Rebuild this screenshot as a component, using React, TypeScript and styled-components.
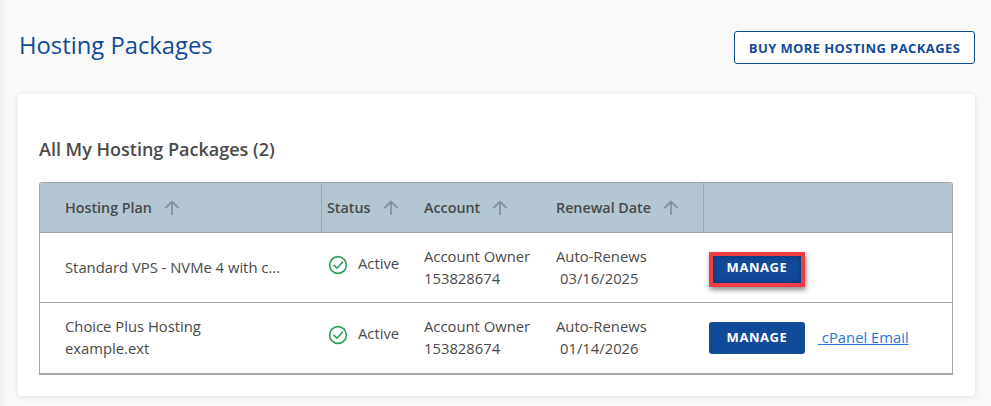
import styled, { createGlobalStyle } from "styled-components";

const BLUE = "#124a9a";
const TEXT = "#4a4a4a";
const LINE = "#a6a6a6";

const GlobalStyle = createGlobalStyle`
  html, body {
    margin: 0;
    padding: 0;
    background: #f9f9f9;
    overflow: hidden;
  }
  body {
    font-family: "Open Sans", "Liberation Sans", sans-serif;
    color: ${TEXT};
  }
`;

const Page = styled.div`
  width: 991px;
  height: 406px;
  box-sizing: border-box;
  padding: 31px 16px 0 18px;
  box-shadow: inset 10px 0 8px -8px rgba(0, 0, 0, 0.05);
`;

const Header = styled.div`
  display: flex;
  justify-content: space-between;
  align-items: flex-start;
  height: 63px;
`;

const Title = styled.h1`
  margin: -2px 0 0 1px;
  font-size: 23.8px;
  line-height: 33px;
  font-weight: 400;
  color: ${BLUE};
`;

const OutlineButton = styled.button`
  width: 241px;
  height: 33px;
  padding: 0;
  border: 1px solid ${BLUE};
  border-radius: 3px;
  background: #fff;
  color: ${BLUE};
  font-family: inherit;
  font-size: 13px;
  font-weight: 700;
  letter-spacing: 0.4px;
`;

const Card = styled.section`
  box-sizing: border-box;
  height: 302px;
  padding: 43px 22px 0 21px;
  background: #fff;
  border-radius: 4px;
  box-shadow: 0 1px 6px rgba(0, 0, 0, 0.1);
`;

const CardTitle = styled.h2`
  margin: 0 0 20px;
  font-size: 18px;
  line-height: 25px;
  font-weight: 600;
  color: ${TEXT};
`;

const Table = styled.table`
  width: 914px;
  table-layout: fixed;
  border-collapse: separate;
  border-spacing: 0;
  border: 1px solid ${LINE};
  border-bottom-width: 2px;
  border-radius: 3px 3px 0 0;
  font-size: 14.8px;
  line-height: 22px;
`;

const HeadCell = styled.th<{ $divider?: boolean; $pad?: number }>`
  height: 50px;
  box-sizing: border-box;
  padding: 0 0 0 ${(p) => p.$pad ?? 0}px;
  background: #b3c6d1;
  border-bottom: 1px solid ${LINE};
  border-right: ${(p) => (p.$divider ? `1px solid ${LINE}` : "none")};
  text-align: left;
  font-size: 14.3px;
  font-weight: 600;
  color: ${TEXT};
`;

const HeadInner = styled.span`
  display: inline-flex;
  align-items: center;
  gap: 12px;
`;

const SortIcon = styled.svg`
  width: 16px;
  height: 16px;
  fill: none;
  stroke: #84929b;
  stroke-width: 1.8;
`;

const Cell = styled.td<{ $pad?: number; $line?: boolean }>`
  height: 70px;
  box-sizing: border-box;
  padding: 0 0 2px ${(p) => p.$pad ?? 0}px;
  border-bottom: ${(p) => (p.$line ? `1px solid ${LINE}` : "none")};
  vertical-align: middle;
  color: ${TEXT};
`;

const Truncated = styled.div`
  width: 218px;
  white-space: nowrap;
  overflow: hidden;
  text-overflow: ellipsis;
`;

const StatusWrap = styled.div`
  display: flex;
  align-items: center;
  gap: 10px;
  padding-bottom: 5px;
`;

const CheckIcon = styled.svg`
  width: 20px;
  height: 20px;
  flex: none;
  margin-top: 1px;
  fill: none;
  stroke-linecap: round;
  stroke-linejoin: round;
`;

const StatusText = styled.span`
  margin-top: -3px;
`;

const Indented = styled.div`
  padding-left: 4px;
`;

const ActionRow = styled.div<{ $nudge?: boolean }>`
  display: flex;
  align-items: center;
  gap: 13px;
  padding-top: ${(p) => (p.$nudge ? 6 : 2)}px;
`;

const ManageButton = styled.button<{ $highlight?: boolean }>`
  width: 96px;
  height: 32px;
  padding: 0 0 2px;
  border: none;
  border-radius: 3px;
  background: ${BLUE};
  color: #fff;
  font-family: inherit;
  font-size: 13px;
  font-weight: 700;
  letter-spacing: 0.55px;
  ${(p) =>
    p.$highlight &&
    `
    border-radius: 0;
    height: 35px;
    padding-bottom: 5px;
    outline: 4px solid #f23c45;
    outline-offset: -4px;
    box-shadow: inset 0 0 6px 4px rgba(8, 40, 90, 0.7), 1px 3px 5px rgba(0, 0, 0, 0.45);
  `}
`;

const LinkText = styled.a`
  margin-bottom: 2px;
  color: #2a76e0;
  text-decoration: underline;
  white-space: pre;
`;

function Sort() {
  return (
    <SortIcon viewBox="0 0 16 16">
      <path d="M8 15V1.5M1.5 8L8 1.5L14.5 8" />
    </SortIcon>
  );
}

function Check() {
  return (
    <CheckIcon viewBox="0 0 20 20">
      <circle cx="10" cy="10" r="8.4" stroke="#2f9d5c" strokeWidth="1.6" />
      <path d="M6 10.4l3 2.8 5.4-6" stroke="#2f9d5c" strokeWidth="1.6" />
    </CheckIcon>
  );
}

const rows = [
  { plan: ["Standard VPS - NVMe 4 with cPanel"], date: "03/16/2025", highlight: true, email: false },
  { plan: ["Choice Plus Hosting", "example.ext"], date: "01/14/2026", highlight: false, email: true },
];

export default function App() {
  return (
    <>
      <GlobalStyle />
      <Page>
        <Header>
          <Title>Hosting Packages</Title>
          <OutlineButton>BUY MORE HOSTING PACKAGES</OutlineButton>
        </Header>
        <Card>
          <CardTitle>All My Hosting Packages (2)</CardTitle>
          <Table>
            <colgroup>
              <col style={{ width: 282 }} />
              <col style={{ width: 102 }} />
              <col style={{ width: 132 }} />
              <col style={{ width: 148 }} />
              <col />
            </colgroup>
            <thead>
              <tr>
                <HeadCell $divider $pad={25}>
                  <HeadInner>Hosting Plan <Sort /></HeadInner>
                </HeadCell>
                <HeadCell $pad={5}>
                  <HeadInner>Status <Sort /></HeadInner>
                </HeadCell>
                <HeadCell>
                  <HeadInner>Account <Sort /></HeadInner>
                </HeadCell>
                <HeadCell $divider>
                  <HeadInner>Renewal Date <Sort /></HeadInner>
                </HeadCell>
                <HeadCell />
              </tr>
            </thead>
            <tbody>
              {rows.map((row, i) => (
                <tr key={row.date}>
                  <Cell $pad={25} $line={i === 0}>
                    {row.plan.length === 1 ? (
                      <Truncated>{row.plan[0]}</Truncated>
                    ) : (
                      row.plan.map((line) => <div key={line}>{line}</div>)
                    )}
                  </Cell>
                  <Cell $pad={6} $line={i === 0}>
                    <StatusWrap>
                      <Check />
                      <StatusText>Active</StatusText>
                    </StatusWrap>
                  </Cell>
                  <Cell $line={i === 0}>
                    <div>Account Owner</div>
                    <div>153828674</div>
                  </Cell>
                  <Cell $line={i === 0}>
                    <div>Auto-Renews</div>
                    <Indented>{row.date}</Indented>
                  </Cell>
                  <Cell $pad={5} $line={i === 0}>
                    <ActionRow $nudge={row.highlight}>
                      <ManageButton $highlight={row.highlight}>MANAGE</ManageButton>
                      {row.email && <LinkText href="#"> cPanel Email</LinkText>}
                    </ActionRow>
                  </Cell>
                </tr>
              ))}
            </tbody>
          </Table>
        </Card>
      </Page>
    </>
  );
}
